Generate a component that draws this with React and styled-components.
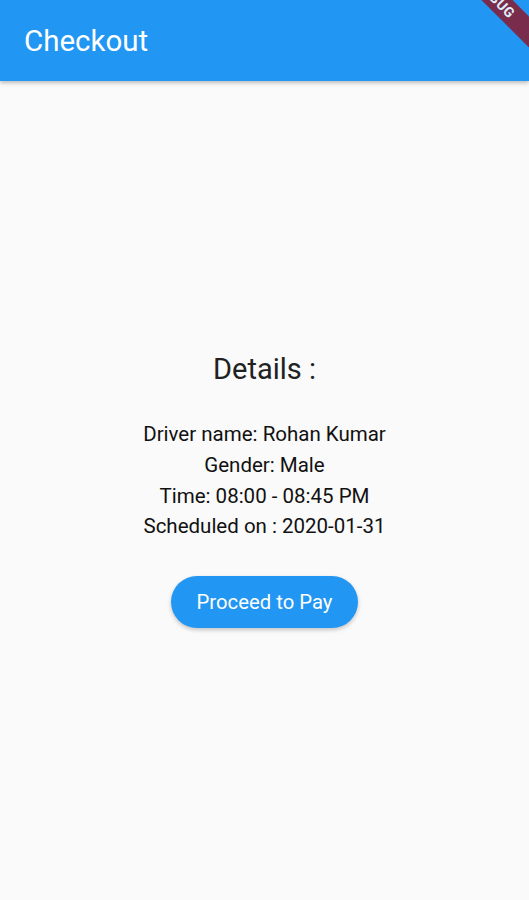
import styled, { createGlobalStyle } from "styled-components";

const GlobalStyle = createGlobalStyle`
  html, body {
    margin: 0;
    padding: 0;
    background: #fafafa;
    font-family: Roboto, "Liberation Sans", sans-serif;
  }
  #root {
    min-height: 100vh;
  }
`;

const App = () => {
  return (
    <Page>
      <GlobalStyle />
      <AppBar>
        <Title>Checkout</Title>
      </AppBar>
      <Body>
        <Heading>Details :</Heading>
        <InfoList>
          <InfoLine>Driver name: Rohan Kumar</InfoLine>
          <InfoLine>Gender: Male</InfoLine>
          <InfoLine>Time: 08:00 - 08:45 PM</InfoLine>
          <InfoLine>Scheduled on : 2020-01-31</InfoLine>
        </InfoList>
        <PayButton>Proceed to Pay</PayButton>
      </Body>
      <DebugBanner>
        <span>DEBUG</span>
      </DebugBanner>
    </Page>
  );
};

const Page = styled.div`
  position: relative;
  overflow: hidden;
  height: 900px;
  display: flex;
  flex-direction: column;
  background: #fafafa;
`;

const AppBar = styled.header`
  height: 81px;
  flex-shrink: 0;
  display: flex;
  align-items: center;
  padding: 0 24px;
  background: #2196f3;
  box-shadow: 0 2px 4px rgba(0, 0, 0, 0.25);
  z-index: 1;
`;

const Title = styled.h1`
  margin: 0;
  font-size: 29.5px;
  font-weight: 400;
  color: #ffffff;
`;

const Body = styled.main`
  flex: 1;
  display: flex;
  flex-direction: column;
  align-items: center;
  justify-content: center;
  padding-bottom: 2px;
`;

const Heading = styled.h2`
  margin: 0 0 32px 0;
  font-size: 29px;
  font-weight: 400;
  line-height: 36px;
  color: #212121;
`;

const InfoList = styled.div`
  display: flex;
  flex-direction: column;
  align-items: center;
  margin-bottom: 34px;
`;

const InfoLine = styled.div`
  font-size: 20.5px;
  line-height: 30.7px;
  color: #111111;
`;

const PayButton = styled.button`
  width: 187px;
  height: 52px;
  border: none;
  border-radius: 26px;
  background: #2196f3;
  color: #ffffff;
  font-family: Roboto, "Liberation Sans", sans-serif;
  font-size: 20.3px;
  box-shadow: 0 2px 4px rgba(0, 0, 0, 0.22);
  cursor: pointer;
`;

const DebugBanner = styled.div`
  position: absolute;
  top: -12px;
  right: -32px;
  width: 130px;
  height: 22px;
  background: #8a1a2f;
  opacity: 0.85;
  transform: rotate(45deg);
  display: flex;
  align-items: center;
  justify-content: center;
  z-index: 2;

  span {
    color: #ffffff;
    font-size: 14px;
    font-weight: 700;
    letter-spacing: 0.5px;
  }
`;

export default App;
